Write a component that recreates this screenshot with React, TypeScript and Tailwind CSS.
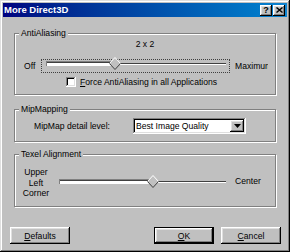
import type { ReactNode } from 'react';

const raised =
  'shadow-[inset_-1px_-1px_#000,inset_1px_1px_#fff,inset_-2px_-2px_#808080,inset_2px_2px_#dfdfdf]';
const sunken =
  'shadow-[inset_-1px_-1px_#fff,inset_1px_1px_#808080,inset_-2px_-2px_#dfdfdf,inset_2px_2px_#000]';

function TitleButton({ children }: { children: ReactNode }) {
  return (
    <div className={`w-[12px] h-[11px] bg-[#c0c0c0] flex items-center justify-center ${raised}`}>
      {children}
    </div>
  );
}

function Group({ label, className, children }: { label: string; className: string; children?: ReactNode }) {
  return (
    <div
      className={`relative w-[262px] ml-[11px] border border-[#808080] shadow-[inset_1px_1px_#fff,1px_1px_#fff] ${className}`}
    >
      <span className="absolute left-[4px] top-[-6px] px-[2px] bg-[#c0c0c0] leading-[10px]">{label}</span>
      {children}
    </div>
  );
}

function Thumb() {
  return (
    <svg width="12" height="13" viewBox="0 0 12 13" className="block">
      <polygon points="6,0.5 11.5,6.5 6,12.5 0.5,6.5" fill="#c0c0c0" />
      <polyline points="0.5,6.5 6,0.5 11.5,6.5" fill="none" stroke="#fff" strokeWidth="1" />
      <polyline points="11.5,6.5 6,12.5 0.5,6.5" fill="none" stroke="#404040" strokeWidth="1" />
    </svg>
  );
}

function Slider({ width, pos }: { width: number; pos: number }) {
  return (
    <div className="relative h-[13px] flex items-center" style={{ width }}>
      <div className="h-[5px] bg-white border-t border-l border-[#808080] shadow-[inset_0_1px_#404040]" style={{ width: pos }} />
      <div className="flex-1 h-[2px] border-t border-[#404040] border-b border-b-white" />
      <div className="absolute top-0" style={{ left: pos - 6 }}>
        <Thumb />
      </div>
    </div>
  );
}

function Button({ label, under, isDefault }: { label: string; under: string; isDefault?: boolean }) {
  return (
    <div
      className={`w-[60px] h-[17px] flex items-center justify-center bg-[#c0c0c0] ${
        isDefault ? 'border border-black' : ''
      }`}
    >
      <div className={`w-full h-full flex items-center justify-center ${raised}`}>
        <span>
          <span className="underline">{under}</span>
          {label}
        </span>
      </div>
    </div>
  );
}

export default function App() {
  return (
    <div
      className={`w-[290px] h-[252px] bg-[#c0c0c0] p-[3px] flex flex-col text-black text-[8.6px] leading-[10px] font-['Liberation_Sans',Arial,sans-serif] shadow-[inset_-1px_-1px_#000,inset_1px_1px_#dfdfdf,inset_-2px_-2px_#808080,inset_2px_2px_#fff]`}
    >
      {/* Title bar */}
      <div className="h-[14px] flex items-center bg-gradient-to-r from-[#000080] to-[#1084d0] pl-[1px] pr-[2px]">
        <span className="text-white font-bold text-[9.5px] leading-[12px]">More Direct3D</span>
        <div className="ml-auto flex gap-[1px]">
          <TitleButton>
            <span className="font-bold text-[9px] leading-none">?</span>
          </TitleButton>
          <TitleButton>
            <svg width="7" height="6" viewBox="0 0 7 6">
              <path d="M0.5 0.5 L6.5 5.5 M6.5 0.5 L0.5 5.5" stroke="#000" strokeWidth="1.4" />
            </svg>
          </TitleButton>
        </div>
      </div>

      {/* AntiAliasing */}
      <Group label="AntiAliasing" className="mt-[16px] h-[62px]">
        <div className="mt-[5px] text-center">2 x 2</div>
        <div className="mt-[10px] flex items-center h-[14px]">
          <span className="ml-[9px] w-[17px]">Off</span>
          <div className="w-[189px] h-[14px] border border-dotted border-[#404040]">
            <div className="ml-[4px] mt-[-3px]">
              <Slider width={180} pos={69} />
            </div>
          </div>
          <span className="ml-[5px] w-[33px] overflow-hidden whitespace-nowrap">Maximum</span>
        </div>
        <div className="mt-[4px] ml-[51px] flex items-center">
          <div className={`w-[10px] h-[10px] bg-white ${sunken}`} />
          <span className="ml-[4px]">
            <span className="underline">F</span>orce AntiAliasing in all Applications
          </span>
        </div>
      </Group>

      {/* MipMapping */}
      <Group label="MipMapping" className="mt-[14px] h-[33px]">
        <div className="mt-[8px] flex items-center">
          <span className="ml-[19px] w-[99px]">MipMap detail level:</span>
          <div className={`w-[113px] h-[16px] bg-white p-[2px] flex ${sunken}`}>
            <span className="flex-1 pl-[1px] flex items-center">Best Image Quality</span>
            <div className={`w-[14px] h-full bg-[#c0c0c0] flex items-center justify-center ${raised}`}>
              <svg width="7" height="4" viewBox="0 0 7 4">
                <path d="M0 0 H7 L3.5 4 Z" fill="#000" />
              </svg>
            </div>
          </div>
        </div>
      </Group>

      {/* Texel Alignment */}
      <Group label="Texel Alignment" className="mt-[12px] h-[53px]">
        <div className="flex items-start">
          <div className="mt-[12px] ml-[6px] w-[30px] text-center leading-[10.5px]">
            Upper
            <br />
            Left
            <br />
            Corner
          </div>
          <div className="mt-[20px] ml-[8px]">
            <Slider width={167} pos={94} />
          </div>
          <span className="mt-[21px] ml-[9px]">Center</span>
        </div>
      </Group>

      {/* Buttons */}
      <div className="mt-[20px] flex">
        <div className="ml-[7px]">
          <Button under="D" label="efaults" />
        </div>
        <div className="ml-auto mr-[6px] flex gap-[7px]">
          <Button under="O" label="K" isDefault />
          <Button under="C" label="ancel" />
        </div>
      </div>
    </div>
  );
}
